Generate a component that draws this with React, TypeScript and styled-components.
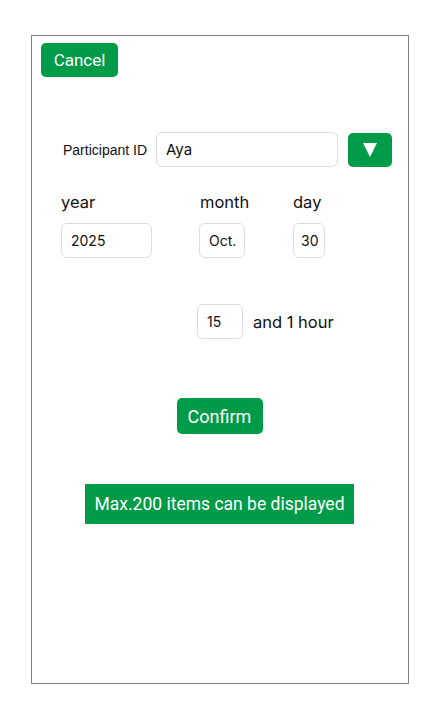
import React from 'react';
import styled, { createGlobalStyle } from 'styled-components';

const GREEN = '#009b48';

const GlobalStyle = createGlobalStyle`
  body {
    margin: 0;
    background: #fff;
    font-family: Inter, "Liberation Sans", sans-serif;
    color: #111;
  }
`;

const Frame = styled.div`
  box-sizing: border-box;
  margin: 35px 0 0 31px;
  width: 378px;
  height: 649px;
  border: 1px solid #808080;
  padding: 7px 0 0 9px;
  display: flex;
  flex-direction: column;
`;

const GreenButton = styled.button<{ $w: number; $h: number; $size: number }>`
  box-sizing: border-box;
  width: ${(p) => p.$w}px;
  height: ${(p) => p.$h}px;
  border: none;
  border-radius: 5px;
  background: ${GREEN};
  color: #fff;
  font-family: Roboto, "Liberation Sans", sans-serif;
  font-size: ${(p) => p.$size}px;
  padding: 0;
  display: flex;
  align-items: center;
  justify-content: center;
`;

const Row = styled.div<{ $top: number; $left: number }>`
  display: flex;
  align-items: center;
  margin-top: ${(p) => p.$top}px;
  margin-left: ${(p) => p.$left}px;
`;

const IdLabel = styled.span`
  font-family: "Liberation Sans", Arial, sans-serif;
  font-size: 14px;
  width: 93px;
`;

const Field = styled.div<{ $w: number; $size?: number }>`
  box-sizing: border-box;
  width: ${(p) => p.$w}px;
  height: 35px;
  border: 1px solid #dcdcdc;
  border-radius: 6px;
  display: flex;
  align-items: center;
  padding-left: 9px;
  font-size: ${(p) => p.$size ?? 14}px;
  white-space: nowrap;
`;

const DateGrid = styled.div`
  display: grid;
  grid-template-columns: 138px 94px auto;
  grid-template-rows: 30px 35px;
  margin-top: 26px;
  margin-left: 20px;
`;

const DateLabel = styled.span<{ $shift?: number }>`
  font-size: 16.5px;
  line-height: 20px;
  align-self: start;
  margin-top: -1px;
  margin-left: ${(p) => p.$shift ?? 0}px;
`;

const HourText = styled.span`
  font-size: 16.5px;
  margin-left: 10px;
`;

const Centered = styled.div<{ $top: number }>`
  display: flex;
  justify-content: center;
  margin-top: ${(p) => p.$top}px;
  margin-left: -10px;
`;

const Banner = styled.div`
  width: 269px;
  height: 40px;
  background: ${GREEN};
  color: #fff;
  font-family: Roboto, "Liberation Sans", sans-serif;
  font-size: 17.5px;
  display: flex;
  align-items: center;
  justify-content: center;
`;

export default function App() {
  return (
    <>
      <GlobalStyle />
      <Frame>
        <GreenButton $w={77} $h={34} $size={17}>Cancel</GreenButton>

        <Row $top={55} $left={22}>
          <IdLabel>Participant ID</IdLabel>
          <Field $w={182} $size={15}>Aya</Field>
          <GreenButton $w={44} $h={34} $size={14} style={{ marginLeft: 10 }}>
            <svg width="14" height="16" viewBox="0 0 14 16">
              <path d="M0 1 L14 1 L7 15 Z" fill="#fff" />
            </svg>
          </GreenButton>
        </Row>

        <DateGrid>
          <DateLabel>year</DateLabel>
          <DateLabel $shift={1}>month</DateLabel>
          <DateLabel>day</DateLabel>
          <Field $w={91}>2025</Field>
          <Field $w={46}>Oct.</Field>
          <Field $w={32} style={{ paddingLeft: 7 }}>30</Field>
        </DateGrid>

        <Row $top={46} $left={156}>
          <Field $w={46}>15</Field>
          <HourText>and 1 hour</HourText>
        </Row>

        <Centered $top={59}>
          <GreenButton $w={86} $h={36} $size={18}>Confirm</GreenButton>
        </Centered>

        <Centered $top={50}>
          <Banner>Max.200 items can be displayed</Banner>
        </Centered>
      </Frame>
    </>
  );
}
